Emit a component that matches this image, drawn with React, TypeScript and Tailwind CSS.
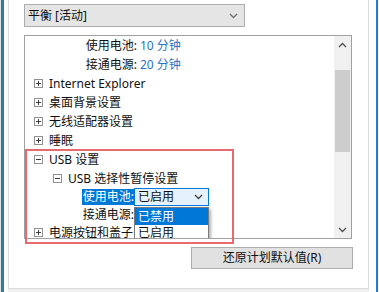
import React from "react"

const font = {
  fontFamily: '"Noto Sans", "Noto Sans CJK SC", sans-serif',
}

const TreeBox = ({ open }: { open?: boolean }) => (
  <svg width="9" height="9" viewBox="0 0 9 9" className="shrink-0">
    <rect x="0.5" y="0.5" width="8" height="8" fill="#fff" stroke="#919191" />
    <line x1="2" y1="4.5" x2="7" y2="4.5" stroke="#3c3c3c" />
    {!open && <line x1="4.5" y1="2" x2="4.5" y2="7" stroke="#3c3c3c" />}
  </svg>
)

const Chevron = ({ up, color = "#606060" }: { up?: boolean; color?: string }) => (
  <svg width="9" height="6" viewBox="0 0 9 6">
    <polyline
      points={up ? "1,5 4.5,1.5 8,5" : "1,1 4.5,4.5 8,1"}
      fill="none"
      stroke={color}
      strokeWidth="1.3"
    />
  </svg>
)

const Node = ({ label, level = 0, open }: { label: string; level?: number; open?: boolean }) => (
  <div className={`h-[19px] flex items-center gap-[6px] whitespace-nowrap ${level === 0 ? "pl-[9px]" : "pl-[28px]"}`}>
    <TreeBox open={open} />
    <span>{label}</span>
  </div>
)

const Value = ({ label, value }: { label: string; value: string }) => (
  <div className="h-[19px] flex items-center pl-[58px] whitespace-nowrap">
    <span className="w-[54px] text-right">{label}</span>
    <span className="ml-[3px] text-[#2a74c6]">{value}</span>
  </div>
)

export default function App() {
  return (
    <div className="w-[379px] h-[292px] bg-white flex overflow-hidden relative text-[12px] text-[#111]" style={font}>
      <div className="w-[1px] bg-[#dfe3e6]" />
      <div className="w-[3px] bg-[#2b7f9c]" />
      <div className="w-[4px] bg-white" />
      <div className="flex flex-col">
        <div className="w-[361px] h-[289px] border-l border-r border-b border-[#dadada] bg-white pl-[15px] pt-[4px] flex flex-col">
          {/* plan combo */}
          <div className="w-[221px] h-[23px] border border-[#adadad] bg-[#e5e5e5] flex items-center justify-between pl-[3px] pr-[6px]">
            <span>平衡 [活动]</span>
            <Chevron color="#707070" />
          </div>

          {/* settings tree */}
          <div className="mt-[8px] w-[328px] h-[204px] border border-[#a0a0a0] flex">
            <div className="flex-1 relative overflow-hidden whitespace-nowrap">
              <Value label="使用电池:" value="10 分钟" />
              <Value label="接通电源:" value="20 分钟" />
              <Node label="Internet Explorer" />
              <Node label="桌面背景设置" />
              <Node label="无线适配器设置" />
              <Node label="睡眠" />
              <Node label="USB 设置" open />
              <Node label="USB 选择性暂停设置" level={1} open />
              <div className="h-[18px] flex items-center pl-[57px]">
                <span className="w-[52px] h-[16px] flex items-center justify-end bg-[#0078d7] text-white">使用电池:</span>
                <div className="relative">
                  <div className="w-[75px] h-[18px] border border-[#0078d7] bg-[#e5f1fb] flex items-center justify-between pl-[3px] pr-[5px]">
                    <span>已启用</span>
                    <Chevron color="#404040" />
                  </div>
                  <div className="absolute left-0 top-[19px] w-[75px] border border-[#7a7a7a] bg-white shadow-[2px_2px_3px_rgba(0,0,0,0.3)] z-10">
                    <div className="h-[17px] flex items-center pl-[3px] bg-[#0078d7] text-white">已禁用</div>
                    <div className="h-[16px] flex items-center pl-[3px]">已启用</div>
                  </div>
                </div>
              </div>
              <div className="h-[18px] flex items-center pl-[57px]">
                <span className="w-[52px] text-right">接通电源:</span>
              </div>
              <div className="h-[17px] flex items-center gap-[6px] pl-[9px]">
                <TreeBox />
                <span>电源按钮和盖子</span>
              </div>
            </div>
            <div className="w-[17px] bg-[#f0f0f0] flex flex-col">
              <div className="h-[17px] flex items-center justify-center">
                <Chevron up color="#505050" />
              </div>
              <div className="h-[17px]" />
              <div className="mx-[1px] h-[82px] bg-[#cdcdcd]" />
              <div className="flex-1" />
              <div className="h-[17px] flex items-center justify-center">
                <Chevron color="#505050" />
              </div>
            </div>
          </div>

          <button className="mt-[8px] ml-[167px] w-[162px] h-[22px] border border-[#adadad] bg-[#e1e1e1] flex items-center justify-center">
            还原计划默认值(R)
          </button>
        </div>
        <div className="flex-1 bg-[#f0f0f0]" />
      </div>
      <div className="w-[7px] bg-white" />
      <div className="w-[2px] bg-[#1f7ed0]" />
      <div className="flex-1 bg-[#f0f0f0]" />

      {/* annotation */}
      <div className="absolute left-[25px] top-[149px] w-[209px] h-[95px] border-2 border-[#e86a6e] pointer-events-none" />
    </div>
  )
}
